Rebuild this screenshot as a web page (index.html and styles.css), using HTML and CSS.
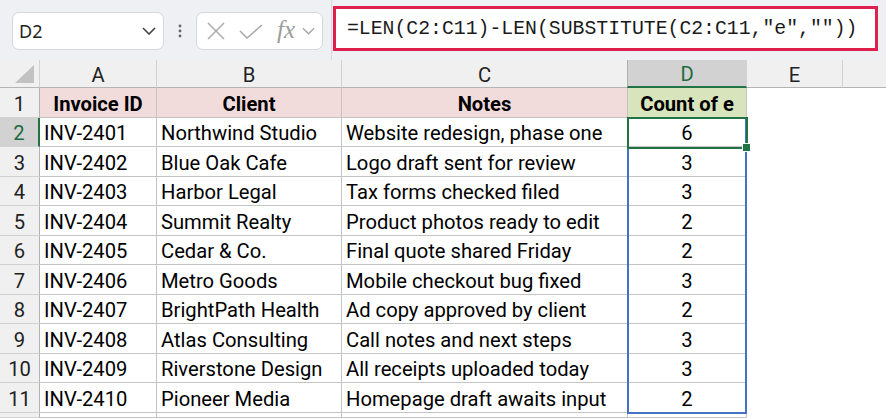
FILE: index.html
```html
<!DOCTYPE html>
<html lang="en">
<head>
  <meta charset="UTF-8">
  <title>Count of e</title>
  <link rel="stylesheet" href="styles.css">
</head>
<body>
  <!-- formula bar -->
  <div class="toolbar">
    <div class="name-box">
      <span>D2</span>
      <svg class="chev" viewBox="0 0 14 8"><polyline points="1,1 7,7 13,1"/></svg>
    </div>
    <svg class="grip" viewBox="0 0 4 14"><circle cx="2" cy="2" r="1.4"/><circle cx="2" cy="7" r="1.4"/><circle cx="2" cy="12" r="1.4"/></svg>
    <div class="fx-box">
      <svg class="ico-x" viewBox="0 0 18 18"><line x1="1" y1="1" x2="17" y2="17"/><line x1="17" y1="1" x2="1" y2="17"/></svg>
      <svg class="ico-ok" viewBox="0 0 24 15"><polyline points="1,7 8,14 23,1"/></svg>
      <span class="fx">fx</span>
      <svg class="chev chev-light" viewBox="0 0 14 8"><polyline points="1,1 7,7 13,1"/></svg>
    </div>
    <div class="divider"></div>
    <div class="formula">=LEN(C2:C11)-LEN(SUBSTITUTE(C2:C11,"e",""))</div>
  </div>

  <!-- grid -->
  <div class="sheet">
    <div class="ch corner"><span class="tri"></span></div>
    <div class="ch">A</div>
    <div class="ch">B</div>
    <div class="ch">C</div>
    <div class="ch ch-sel">D</div>
    <div class="ch">E</div>
    <div class="ch ch-last"></div>

    <div class="rh">1</div>
    <div class="c hd">Invoice ID</div>
    <div class="c hd">Client</div>
    <div class="c hd">Notes</div>
    <div class="c hd cnt">Count of e</div>
    <div class="blank"></div>
    <div class="blank"></div>

    <div class="rh rh-sel">2</div>
    <div class="c">INV-2401</div>
    <div class="c">Northwind Studio</div>
    <div class="c">Website redesign, phase one</div>
    <div class="c num">6</div>
    <div class="blank"></div>
    <div class="blank"></div>

    <div class="rh">3</div>
    <div class="c">INV-2402</div>
    <div class="c">Blue Oak Cafe</div>
    <div class="c">Logo draft sent for review</div>
    <div class="c num">3</div>
    <div class="blank"></div>
    <div class="blank"></div>

    <div class="rh">4</div>
    <div class="c">INV-2403</div>
    <div class="c">Harbor Legal</div>
    <div class="c">Tax forms checked filed</div>
    <div class="c num">3</div>
    <div class="blank"></div>
    <div class="blank"></div>

    <div class="rh">5</div>
    <div class="c">INV-2404</div>
    <div class="c">Summit Realty</div>
    <div class="c">Product photos ready to edit</div>
    <div class="c num">2</div>
    <div class="blank"></div>
    <div class="blank"></div>

    <div class="rh">6</div>
    <div class="c">INV-2405</div>
    <div class="c">Cedar &amp; Co.</div>
    <div class="c">Final quote shared Friday</div>
    <div class="c num">2</div>
    <div class="blank"></div>
    <div class="blank"></div>

    <div class="rh">7</div>
    <div class="c">INV-2406</div>
    <div class="c">Metro Goods</div>
    <div class="c">Mobile checkout bug fixed</div>
    <div class="c num">3</div>
    <div class="blank"></div>
    <div class="blank"></div>

    <div class="rh">8</div>
    <div class="c">INV-2407</div>
    <div class="c">BrightPath Health</div>
    <div class="c">Ad copy approved by client</div>
    <div class="c num">2</div>
    <div class="blank"></div>
    <div class="blank"></div>

    <div class="rh">9</div>
    <div class="c">INV-2408</div>
    <div class="c">Atlas Consulting</div>
    <div class="c">Call notes and next steps</div>
    <div class="c num">3</div>
    <div class="blank"></div>
    <div class="blank"></div>

    <div class="rh">10</div>
    <div class="c">INV-2409</div>
    <div class="c">Riverstone Design</div>
    <div class="c">All receipts uploaded today</div>
    <div class="c num">3</div>
    <div class="blank"></div>
    <div class="blank"></div>

    <div class="rh">11</div>
    <div class="c">INV-2410</div>
    <div class="c">Pioneer Media</div>
    <div class="c">Homepage draft awaits input</div>
    <div class="c num">2</div>
    <div class="blank"></div>
    <div class="blank"></div>

    <div class="rh"></div>
    <div class="c"></div>
    <div class="c"></div>
    <div class="c"></div>
    <div class="c"></div>
    <div class="blank"></div>
    <div class="blank"></div>

    <!-- spill range and active cell -->
    <div class="spill"></div>
    <div class="active"><span class="handle"></span></div>
  </div>
</body>
</html>
```

FILE: styles.css
```css
body {
  margin: 0;
  background: #fff;
  font-family: Roboto, "Liberation Sans", sans-serif;
  color: #000;
}

/* formula bar */
.toolbar {
  height: 60px;
  background: #eef0f3;
  display: flex;
  align-items: flex-start;
  padding-left: 12px;
  box-sizing: border-box;
}
.name-box {
  margin-top: 12px;
  width: 152px;
  height: 38px;
  box-sizing: border-box;
  background: #fff;
  border: 1px solid #d5d7da;
  border-radius: 7px;
  display: flex;
  align-items: center;
  justify-content: space-between;
  padding: 0 7px 0 6px;
  font-family: "Noto Sans", sans-serif;
  font-size: 18px;
  color: #222;
}
.chev {
  width: 14px;
  height: 8px;
  fill: none;
  stroke: #444;
  stroke-width: 1.6;
}
.chev-light {
  stroke: #a8a8a8;
  width: 13px;
}
.grip {
  margin: 24px 0 0 14px;
  width: 4px;
  height: 14px;
  fill: #666;
}
.fx-box {
  margin: 12px 0 0 14px;
  width: 127px;
  height: 38px;
  box-sizing: border-box;
  background: #fff;
  border: 1px solid #d5d7da;
  border-radius: 7px;
  display: flex;
  align-items: center;
  padding-left: 10px;
}
.ico-x {
  width: 18px;
  height: 18px;
  stroke: #a8a8a8;
  stroke-width: 1.5;
}
.ico-ok {
  margin-left: 14px;
  width: 24px;
  height: 15px;
  fill: none;
  stroke: #a8a8a8;
  stroke-width: 1.5;
}
.fx {
  margin-left: 14px;
  font-family: "Liberation Serif", serif;
  font-style: italic;
  font-size: 25px;
  color: #9c9c9c;
  line-height: 1;
  margin-top: -3px;
}
.fx-box .chev-light {
  margin-left: 7px;
}
.divider {
  margin-left: 8px;
  width: 1px;
  height: 60px;
  background: #d6d8db;
}
.formula {
  margin: 6px 0 0 1px;
  width: 545px;
  height: 45px;
  box-sizing: border-box;
  border: 3px solid #e0204c;
  background: #fff;
  padding: 1px 0 0 11px;
  display: flex;
  align-items: center;
  font-family: "Liberation Mono", monospace;
  font-size: 19.8px;
  color: #1a1a1a;
  white-space: nowrap;
}

/* sheet */
.sheet {
  position: relative;
  display: grid;
  grid-template-columns: 40px 117px 185px 286px 119px 96px 1fr;
  grid-template-rows: 28px repeat(11, 29.5px) 1fr;
  height: 358px;
  font-size: 20.2px;
}
.ch, .rh {
  background: #f0f0f0;
  color: #222;
  display: flex;
  align-items: center;
  justify-content: center;
  box-sizing: border-box;
}
.ch {
  padding-top: 2px;
  border-right: 1px solid #d2d2d2;
  border-bottom: 1px solid #b4b4b4;
}
.ch-last {
  border-right: none;
}
.rh {
  padding-top: 3px;
  border-right: 1px solid #b4b4b4;
  border-bottom: 1px solid #d2d2d2;
}
.ch-sel {
  background: #d2d2d2;
  color: #1e6b3f;
  border-left: 1px solid #b0b0b0;
  border-bottom: 2px solid #217346;
  margin-left: -1px;
}
.rh-sel {
  background: #d2d2d2;
  color: #1e6b3f;
  border-right: 2px solid #217346;
}
.corner {
  position: relative;
}
.tri {
  position: absolute;
  right: 5px;
  bottom: 4px;
  width: 19px;
  height: 18px;
  background: #c2c2c2;
  clip-path: polygon(100% 0, 100% 100%, 0 100%);
}
.c {
  display: flex;
  align-items: center;
  box-sizing: border-box;
  padding: 3px 0 0 4px;
  border-right: 1px solid #c4c4c4;
  border-bottom: 1px solid #c4c4c4;
  white-space: nowrap;
  overflow: hidden;
}
.hd {
  background: #f2dcdb;
  font-weight: bold;
  justify-content: center;
  padding-left: 0;
}
.cnt {
  background: #d8e4bc;
}
.num {
  justify-content: center;
  padding-left: 0;
}
.blank {
  background: #fff;
}

/* overlays for the spill range and the active cell */
.spill {
  position: absolute;
  grid-column: 5 / 6;
  grid-row: 3 / 13;
  top: 0;
  bottom: -1px;
  left: -1px;
  right: 0;
  border: 2px solid #4472c4;
  border-top: none;
  pointer-events: none;
}
.active {
  position: absolute;
  grid-column: 5 / 6;
  grid-row: 3 / 4;
  top: -1px;
  bottom: -2px;
  left: -1px;
  right: -1px;
  border: 2px solid #217346;
  pointer-events: none;
}
.handle {
  position: absolute;
  right: -5px;
  bottom: -5px;
  width: 7px;
  height: 7px;
  background: #217346;
  border: 1px solid #fff;
}
```
